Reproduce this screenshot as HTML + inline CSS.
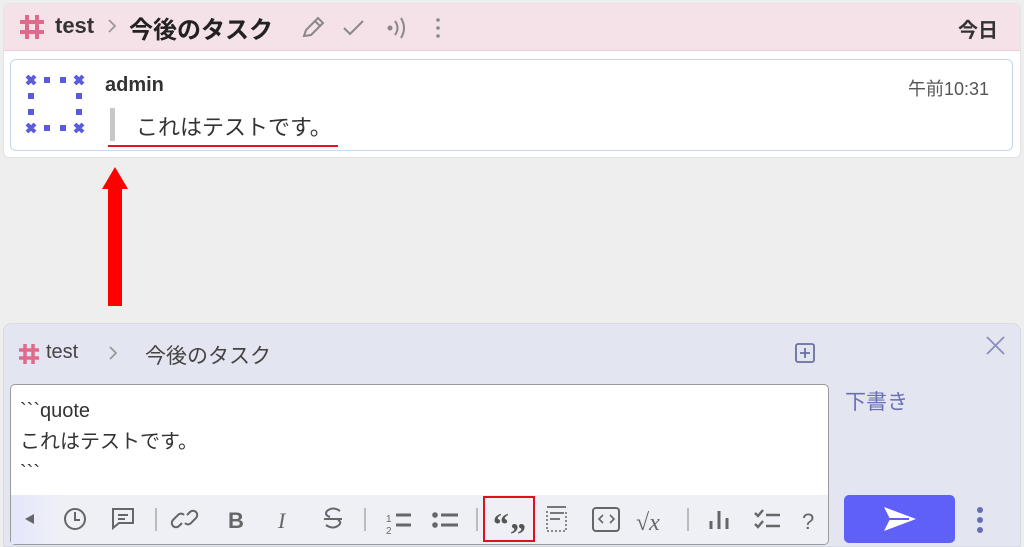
<!DOCTYPE html>
<html><head><meta charset="utf-8"><style>
*{box-sizing:border-box;margin:0;padding:0}
html,body{width:1024px;height:547px;overflow:hidden}
body{background:#eeeeee;font-family:"Liberation Sans","Noto Sans CJK JP",sans-serif;position:relative;color:#333}
.a{position:absolute}
.t{font-size:20px;line-height:31px;color:#333;white-space:pre}
</style></head><body>
<div class="a" style="left:3px;top:3px;width:1018px;height:155px;background:#fff;border-radius:6px;border:1px solid #e2e2e2"></div>
<div class="a" style="left:4px;top:4px;width:1016px;height:47px;background:#f5e2e8;border-radius:6px 6px 0 0;border-bottom:1px solid #e8cfd7"></div>
<svg class="a" style="left:19px;top:14px" width="26" height="26" stroke="#e06a8c" stroke-width="4"><path d="M8 1v24M18 1v24M1 8h24M1 18h24"/></svg>
<div class="a" style="left:55px;top:13px;font-size:22px;font-weight:bold;color:#333">test</div>
<svg class="a" style="left:106px;top:18px" width="12" height="16" stroke="#999" stroke-width="1.8" fill="none"><path d="M3 2l6 6-6 6"/></svg>
<div class="a" style="left:129px;top:10px;font-size:24px;font-weight:bold;color:#222">今後のタスク</div>
<svg class="a" style="left:300px;top:14px" width="150" height="28" fill="none" stroke="#888" stroke-width="2">
<path d="M4 22 L6 16 L18 4 L23 9 L11 21 Z M15 7 L20 12"/>
<path d="M44 14 L50 20 L63 7"/>
<circle cx="90" cy="14" r="1.5" fill="#888"/><path d="M95 7 Q100 14 95 21 M101 4 Q107 14 101 24"/>
<circle cx="138" cy="6" r="1.8" fill="#888" stroke="none"/><circle cx="138" cy="14" r="1.8" fill="#888" stroke="none"/><circle cx="138" cy="22" r="1.8" fill="#888" stroke="none"/>
</svg>
<div class="a" style="left:958px;top:14px;font-size:20px;font-weight:bold;color:#333">今日</div>
<div class="a" style="left:10px;top:59px;width:1003px;height:92px;border:1px solid #c5d6ee;border-radius:6px;background:#fff"></div>
<svg class="a" style="left:25px;top:74px" width="60" height="60" fill="#5b5cdb">
<g stroke="#5b5cdb" stroke-width="4"><path d="M2 2l8 8M10 2l-8 8 M50 2l8 8M58 2l-8 8 M2 50l8 8M10 50l-8 8 M50 50l8 8M58 50l-8 8"/></g>
<rect x="19" y="3" width="6" height="6"/><rect x="35" y="3" width="6" height="6"/>
<rect x="19" y="51" width="6" height="6"/><rect x="35" y="51" width="6" height="6"/>
<rect x="3" y="19" width="6" height="6"/><rect x="3" y="35" width="6" height="6"/>
<rect x="51" y="19" width="6" height="6"/><rect x="51" y="35" width="6" height="6"/>
</svg>
<div class="a" style="left:105px;top:74px;font-size:20px;font-weight:bold;color:#333">admin</div>
<div class="a" style="left:908px;top:75px;font-size:18px;color:#555">午前10:31</div>
<div class="a" style="left:110px;top:108px;width:5px;height:33px;background:#c8c8c8"></div>
<div class="a" style="left:136px;top:110px;font-size:22px;color:#333">これはテストです。</div>
<div class="a" style="left:108px;top:145px;width:230px;height:2px;background:#e8121e"></div>
<svg class="a" style="left:101px;top:167px" width="28" height="140"><path d="M14 0 L27 22 L21 22 L21 139 L7 139 L7 22 L1 22 Z" fill="#f00"/></svg>
<div class="a" style="left:3px;top:323px;width:1018px;height:224px;background:#e3e5f0;border-radius:8px 8px 0 0;border:1px solid #d8dae6"></div>
<svg class="a" style="left:18px;top:343px" width="22" height="22" stroke="#e06a8c" stroke-width="3.5"><path d="M7 1v20M15 1v20M1 7h20M1 15h20"/></svg>
<div class="a" style="left:46px;top:341px;font-size:20px;color:#444">test</div>
<svg class="a" style="left:107px;top:345px" width="12" height="16" stroke="#999" stroke-width="1.8" fill="none"><path d="M3 2l6 6-6 6"/></svg>
<div class="a" style="left:145px;top:340px;font-size:21px;color:#444">今後のタスク</div>
<svg class="a" style="left:794px;top:342px" width="24" height="24" fill="none" stroke="#6a6fa0" stroke-width="1.8"><rect x="2" y="2" width="18" height="18" rx="2"/><path d="M11 6v10M6 11h10"/></svg>
<svg class="a" style="left:985px;top:335px" width="22" height="22" stroke="#8a8fc0" stroke-width="1.8"><path d="M2 2L19 19M19 2L2 19"/></svg>
<div class="a" style="left:845px;top:386px;font-size:21px;color:#6a6fb5">下書き</div>
<div class="a" style="left:10px;top:384px;width:819px;height:161px;background:#fff;border:1px solid #9a9a9a;border-radius:5px"></div>
<div class="a t" style="left:20px;top:396px">&#96;&#96;&#96;quote</div>
<div class="a t" style="left:20px;top:427px">これはテストです。</div>
<div class="a t" style="left:20px;top:458px">&#96;&#96;&#96;</div>
<div class="a" style="left:11px;top:495px;width:817px;height:49px;background:#eff0f6;border-radius:0 0 4px 4px"></div>
<div class="a" style="left:11px;top:495px;width:50px;height:49px;background:linear-gradient(90deg,#e4e6fb,#eff0f6)"></div>
<svg class="a" style="left:10px;top:495px" width="819" height="50" fill="none" stroke="#666" stroke-width="2">
<path d="M15 24 l9 -5 v10z" fill="#666" stroke="none"/>
<circle cx="65" cy="24" r="10"/><path d="M65 17v8h5"/>
<path d="M103 14h20v14h-14l-6 5z M108 20h10M108 24h7"/>
<path d="M146 13v23" stroke="#bbb"/>
<path d="M172 28 l-3 3a4 4 0 0 1-6-6l5-5a4 4 0 0 1 6 0 M177 20l3-3a4 4 0 0 1 6 6l-5 5a4 4 0 0 1-6 0"/>
<text x="218" y="33" font-family="Liberation Sans" font-size="22" font-weight="bold" fill="#666" stroke="none">B</text>
<text x="268" y="33" font-family="Liberation Serif" font-size="22" font-style="italic" fill="#666" stroke="none">I</text>
<path d="M314 24h18M330 16q-7-5-13 0q-3 4 3 6M316 30q7 5 13 0q3-3-1-5"/>
<path d="M355 13v23" stroke="#bbb"/>
<text x="376" y="27" font-size="10" fill="#666" stroke="none">1</text><text x="376" y="39" font-size="10" fill="#666" stroke="none">2</text>
<path d="M386 20h15M386 30h15" stroke-width="3"/>
<circle cx="425" cy="20" r="1.8" fill="#666"/><circle cx="425" cy="30" r="1.8" fill="#666"/><path d="M431 20h17M431 30h17" stroke-width="3"/>
<path d="M467 13v23" stroke="#bbb"/>
<text x="483" y="40" font-family="Liberation Serif" font-size="32" font-weight="bold" fill="#555" stroke="none">“</text>
<text x="500" y="50" font-family="Liberation Serif" font-size="32" font-weight="bold" fill="#555" stroke="none">”</text>
<path d="M537 12h19M540 18h14M540 24h10" stroke-width="1.8"/><path d="M537 16v20h19v-20" stroke-dasharray="2 2" stroke-width="1.5"/>
<rect x="583" y="13" width="26" height="23" rx="3"/><path d="M593 20l-4 4 4 4M600 20l4 4-4 4" stroke-width="1.6"/>
<text x="626" y="35" font-family="Liberation Serif" font-size="24" fill="#666" stroke="none">√<tspan font-style="italic">x</tspan></text>
<path d="M678 13v23" stroke="#bbb"/>
<path d="M701 26v8M709 16v18M717 23v11" stroke-width="3"/>
<path d="M745 18l3 3 5-6M745 29l3 3 5-6M756 20h14M756 31h14" stroke-width="2.4"/>
<text x="792" y="34" font-size="22" fill="#666" stroke="none">?</text>
</svg>
<div class="a" style="left:483px;top:496px;width:52px;height:46px;border:2px solid #e01020"></div>
<div class="a" style="left:844px;top:495px;width:111px;height:48px;background:#5e60f7;border-radius:5px"></div>
<svg class="a" style="left:882px;top:505px" width="36" height="28"><path d="M2 2 L34 14 L2 26 L8 14 Z" fill="#fff"/><path d="M7 14h20" stroke="#5e60f7" stroke-width="2"/></svg>
<svg class="a" style="left:974px;top:505px" width="12" height="30" fill="#6a6fb5"><circle cx="6" cy="5" r="3"/><circle cx="6" cy="15" r="3"/><circle cx="6" cy="25" r="3"/></svg>
</body></html>
